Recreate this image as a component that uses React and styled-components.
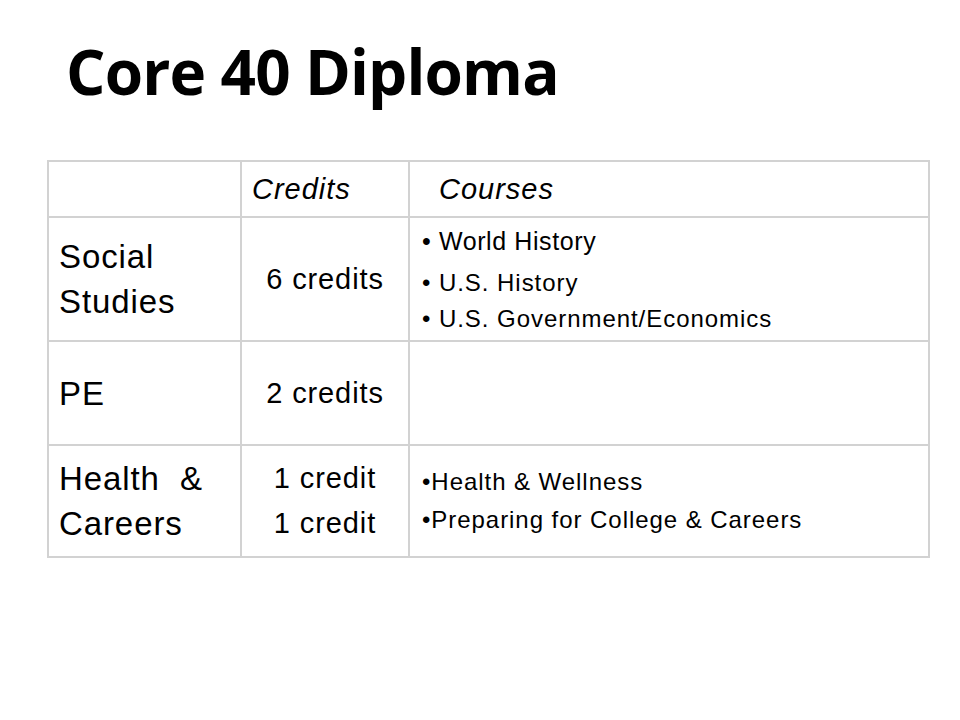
import styled, { createGlobalStyle } from 'styled-components';

const GlobalStyle = createGlobalStyle`
  html, body {
    margin: 0;
    padding: 0;
    background: #ffffff;
  }
  body {
    font-family: "Liberation Sans", Arial, sans-serif;
    color: #000;
  }
`;

const rows = [
  {
    label: ['Social', 'Studies'],
    credits: ['6 credits'],
    height: 124,
    courses: [
      { text: '• World History', big: true },
      { text: '• U.S. History' },
      { text: '• U.S. Government/Economics' },
    ],
  },
  { label: ['PE'], credits: ['2 credits'], height: 104, courses: [] },
  {
    label: ['Health  &', 'Careers'],
    credits: ['1 credit', '1 credit'],
    height: 112,
    tight: true,
    courses: [
      { text: '•Health & Wellness' },
      { text: '•Preparing for College & Careers' },
    ],
  },
];

const App = () => {
  return (
    <Slide>
      <GlobalStyle />
      <Title>Core 40 Diploma</Title>
      <Table>
        <colgroup>
          <col style={{ width: 193 }} />
          <col style={{ width: 168 }} />
          <col style={{ width: 520 }} />
        </colgroup>
        <thead>
          <tr>
            <HeadCell />
            <HeadCell $pad={10}>Credits</HeadCell>
            <HeadCell $pad={29}>Courses</HeadCell>
          </tr>
        </thead>
        <tbody>
          {rows.map((row) => (
            <Row key={row.label[0]} $height={row.height}>
              <LabelCell>
                {row.label.map((line) => (
                  <Line key={line}>{line}</Line>
                ))}
              </LabelCell>
              <CreditCell>
                {row.credits.map((c, i) => (
                  <Line key={i}>{c}</Line>
                ))}
              </CreditCell>
              <CourseCell>
                <CourseList>
                  {row.courses.map((c) => (
                    <Course key={c.text} $big={c.big} $tight={row.tight}>
                      {c.text}
                    </Course>
                  ))}
                </CourseList>
              </CourseCell>
            </Row>
          ))}
        </tbody>
      </Table>
    </Slide>
  );
};

const Slide = styled.div`
  width: 960px;
  height: 720px;
  padding: 40px 0 0 47px;
  box-sizing: border-box;
`;

const Title = styled.h1`
  margin: 0 0 58px 19px;
  font-family: "Open Sans", "Liberation Sans", sans-serif;
  font-weight: 700;
  font-size: 62px;
  line-height: 62px;
  letter-spacing: -0.85px;
  color: #000;
`;

const Table = styled.table`
  width: 881px;
  table-layout: fixed;
  border-collapse: collapse;
  border: 2px solid #d2d2d2;

  td, th {
    border: 2px solid #d2d2d2;
    vertical-align: middle;
  }
`;

const HeadCell = styled.th`
  height: 54px;
  padding: 0 0 0 ${(p) => p.$pad || 0}px;
  text-align: left;
  font-style: italic;
  font-weight: 400;
  font-size: 29px;
  letter-spacing: 1px;
`;

const Row = styled.tr`
  height: ${(p) => p.$height}px;
`;

const Line = styled.div`
  white-space: pre;
`;

const LabelCell = styled.td`
  padding: 0 0 0 10px;
  font-size: 33px;
  line-height: 45px;
  letter-spacing: 0.9px;
`;

const CreditCell = styled.td`
  padding: 0;
  text-align: center;
  font-size: 29px;
  line-height: 45px;
  letter-spacing: 0.9px;
`;

const CourseCell = styled.td`
  padding: 0 0 0 12px;
`;

const CourseList = styled.div`
  display: flex;
  flex-direction: column;
`;

const Course = styled.div`
  white-space: pre;
  font-size: ${(p) => (p.$big ? 25 : 24)}px;
  line-height: ${(p) => (p.$big ? 40 : p.$tight ? 38 : 36)}px;
  letter-spacing: ${(p) => (p.$big ? 0.6 : 0.95)}px;
  margin-bottom: ${(p) => (p.$big ? 4 : 0)}px;
`;

export default App;
